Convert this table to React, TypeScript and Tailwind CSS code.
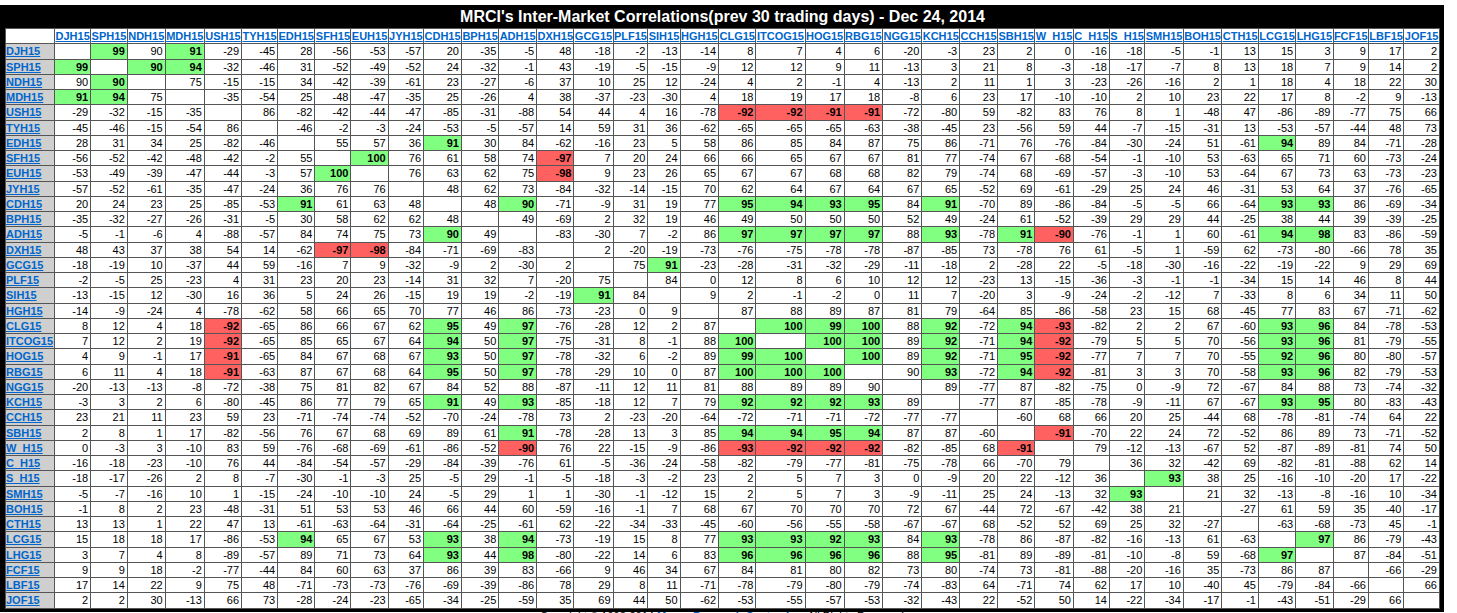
const symbols = [
	"DJH15", "SPH15", "NDH15", "MDH15", "USH15", "TYH15", "EDH15", "SFH15", "EUH15", "JYH15",
	"CDH15", "BPH15", "ADH15", "DXH15", "GCG15", "PLF15", "SIH15", "HGH15", "CLG15", "ITCOG15",
	"HOG15", "RBG15", "NGG15", "KCH15", "CCH15", "SBH15", "W_H15", "C_H15", "S_H15", "SMH15",
	"BOH15", "CTH15", "LCG15", "LHG15", "FCF15", "LBF15", "JOF15",
];

// one row per symbol, same order as the columns; "." = diagonal, g = strong positive, r = strong negative
const rows = [
	". 99g 90 91g -29 -45 28 -56 -53 -57 20 -35 -5 48 -18 -2 -13 -14 8 7 4 6 -20 -3 23 2 0 -16 -18 -5 -1 13 15 3 9 17 2",
	"99g . 90g 94g -32 -46 31 -52 -49 -52 24 -32 -1 43 -19 -5 -15 -9 12 12 9 11 -13 3 21 8 -3 -18 -17 -7 8 13 18 7 9 14 2",
	"90 90g . 75 -15 -15 34 -42 -39 -61 23 -27 -6 37 10 25 12 -24 4 2 -1 4 -13 2 11 1 3 -23 -26 -16 2 1 18 4 18 22 30",
	"91g 94g 75 . -35 -54 25 -48 -47 -35 25 -26 4 38 -37 -23 -30 4 18 19 17 18 -8 6 23 17 -10 -10 2 10 23 22 17 8 -2 9 -13",
	"-29 -32 -15 -35 . 86 -82 -42 -44 -47 -85 -31 -88 54 44 4 16 -78 -92r -92r -91r -91r -72 -80 59 -82 83 76 8 1 -48 47 -86 -89 -77 75 66",
	"-45 -46 -15 -54 86 . -46 -2 -3 -24 -53 -5 -57 14 59 31 36 -62 -65 -65 -65 -63 -38 -45 23 -56 59 44 -7 -15 -31 13 -53 -57 -44 48 73",
	"28 31 34 25 -82 -46 . 55 57 36 91g 30 84 -62 -16 23 5 58 86 85 84 87 75 86 -71 76 -76 -84 -30 -24 51 -61 94g 89 84 -71 -28",
	"-56 -52 -42 -48 -42 -2 55 . 100g 76 61 58 74 -97r 7 20 24 66 66 65 67 67 81 77 -74 67 -68 -54 -1 -10 53 -63 65 71 60 -73 -24",
	"-53 -49 -39 -47 -44 -3 57 100g . 76 63 62 75 -98r 9 23 26 65 67 67 68 68 82 79 -74 68 -69 -57 -3 -10 53 -64 67 73 63 -73 -23",
	"-57 -52 -61 -35 -47 -24 36 76 76 . 48 62 73 -84 -32 -14 -15 70 62 64 67 64 67 65 -52 69 -61 -29 25 24 46 -31 53 64 37 -76 -65",
	"20 24 23 25 -85 -53 91g 61 63 48 . 48 90g -71 -9 31 19 77 95g 94g 93g 95g 84 91g -70 89 -86 -84 -5 -5 66 -64 93g 93g 86 -69 -34",
	"-35 -32 -27 -26 -31 -5 30 58 62 62 48 . 49 -69 2 32 19 46 49 50 50 50 52 49 -24 61 -52 -39 29 29 44 -25 38 44 39 -39 -25",
	"-5 -1 -6 4 -88 -57 84 74 75 73 90g 49 . -83 -30 7 -2 86 97g 97g 97g 97g 88 93g -78 91g -90r -76 -1 1 60 -61 94g 98g 83 -86 -59",
	"48 43 37 38 54 14 -62 -97r -98r -84 -71 -69 -83 . 2 -20 -19 -73 -76 -75 -78 -78 -87 -85 73 -78 76 61 -5 1 -59 62 -73 -80 -66 78 35",
	"-18 -19 10 -37 44 59 -16 7 9 -32 -9 2 -30 2 . 75 91g -23 -28 -31 -32 -29 -11 -18 2 -28 22 -5 -18 -30 -16 -22 -19 -22 9 29 69",
	"-2 -5 25 -23 4 31 23 20 23 -14 31 32 7 -20 75 . 84 0 12 8 6 10 12 12 -23 13 -15 -36 -3 -1 -1 -34 15 14 46 8 44",
	"-13 -15 12 -30 16 36 5 24 26 -15 19 19 -2 -19 91g 84 . 9 2 -1 -2 0 11 7 -20 3 -9 -24 -2 -12 7 -33 8 6 34 11 50",
	"-14 -9 -24 4 -78 -62 58 66 65 70 77 46 86 -73 -23 0 9 . 87 88 89 87 81 79 -64 85 -86 -58 23 15 68 -45 77 83 67 -71 -62",
	"8 12 4 18 -92r -65 86 66 67 62 95g 49 97g -76 -28 12 2 87 . 100g 99g 100g 88 92g -72 94g -93r -82 2 2 67 -60 93g 96g 84 -78 -53",
	"7 12 2 19 -92r -65 85 65 67 64 94g 50 97g -75 -31 8 -1 88 100g . 100g 100g 89 92g -71 94g -92r -79 5 5 70 -56 93g 96g 81 -79 -55",
	"4 9 -1 17 -91r -65 84 67 68 67 93g 50 97g -78 -32 6 -2 89 99g 100g . 100g 89 92g -71 95g -92r -77 7 7 70 -55 92g 96g 80 -80 -57",
	"6 11 4 18 -91r -63 87 67 68 64 95g 50 97g -78 -29 10 0 87 100g 100g 100g . 90 93g -72 94g -92r -81 3 3 70 -58 93g 96g 82 -79 -53",
	"-20 -13 -13 -8 -72 -38 75 81 82 67 84 52 88 -87 -11 12 11 81 88 89 89 90 . 89 -77 87 -82 -75 0 -9 72 -67 84 88 73 -74 -32",
	"-3 3 2 6 -80 -45 86 77 79 65 91g 49 93g -85 -18 12 7 79 92g 92g 92g 93g 89 . -77 87 -85 -78 -9 -11 67 -67 93g 95g 80 -83 -43",
	"23 21 11 23 59 23 -71 -74 -74 -52 -70 -24 -78 73 2 -23 -20 -64 -72 -71 -71 -72 -77 -77 . -60 68 66 20 25 -44 68 -78 -81 -74 64 22",
	"2 8 1 17 -82 -56 76 67 68 69 89 61 91g -78 -28 13 3 85 94g 94g 95g 94g 87 87 -60 . -91r -70 22 24 72 -52 86 89 73 -71 -52",
	"0 -3 3 -10 83 59 -76 -68 -69 -61 -86 -52 -90r 76 22 -15 -9 -86 -93r -92r -92r -92r -82 -85 68 -91r . 79 -12 -13 -67 52 -87 -89 -81 74 50",
	"-16 -18 -23 -10 76 44 -84 -54 -57 -29 -84 -39 -76 61 -5 -36 -24 -58 -82 -79 -77 -81 -75 -78 66 -70 79 . 36 32 -42 69 -82 -81 -88 62 14",
	"-18 -17 -26 2 8 -7 -30 -1 -3 25 -5 29 -1 -5 -18 -3 -2 23 2 5 7 3 0 -9 20 22 -12 36 . 93g 38 25 -16 -10 -20 17 -22",
	"-5 -7 -16 10 1 -15 -24 -10 -10 24 -5 29 1 1 -30 -1 -12 15 2 5 7 3 -9 -11 25 24 -13 32 93g . 21 32 -13 -8 -16 10 -34",
	"-1 8 2 23 -48 -31 51 53 53 46 66 44 60 -59 -16 -1 7 68 67 70 70 70 72 67 -44 72 -67 -42 38 21 . -27 61 59 35 -40 -17",
	"13 13 1 22 47 13 -61 -63 -64 -31 -64 -25 -61 62 -22 -34 -33 -45 -60 -56 -55 -58 -67 -67 68 -52 52 69 25 32 -27 . -63 -68 -73 45 -1",
	"15 18 18 17 -86 -53 94g 65 67 53 93g 38 94g -73 -19 15 8 77 93g 93g 92g 93g 84 93g -78 86 -87 -82 -16 -13 61 -63 . 97g 86 -79 -43",
	"3 7 4 8 -89 -57 89 71 73 64 93g 44 98g -80 -22 14 6 83 96g 96g 96g 96g 88 95g -81 89 -89 -81 -10 -8 59 -68 97g . 87 -84 -51",
	"9 9 18 -2 -77 -44 84 60 63 37 86 39 83 -66 9 46 34 67 84 81 80 82 73 80 -74 73 -81 -88 -20 -16 35 -73 86 87 . -66 -29",
	"17 14 22 9 75 48 -71 -73 -73 -76 -69 -39 -86 78 29 8 11 -71 -78 -79 -80 -79 -74 -83 64 -71 74 62 17 10 -40 45 -79 -84 -66 . 66",
	"2 2 30 -13 66 73 -28 -24 -23 -65 -34 -25 -59 35 69 44 50 -62 -53 -55 -57 -53 -32 -43 22 -52 50 14 -22 -34 -17 -1 -43 -51 -29 66 .",
];

const label = (s: string) => s.replace("_", "\u00a0\u00a0");

function ValueCell({ token }: { token: string }) {
	if (token === ".") return <td className="border border-[#555] bg-white p-0" />;
	const mark = token.slice(-1);
	if (mark === "g") {
		return (
			<td className="border border-[#555] bg-[#80ff80] py-0 pl-0 pr-[2px] text-right font-bold">
				{token.slice(0, -1)}
			</td>
		);
	}
	if (mark === "r") {
		return (
			<td className="border border-[#555] bg-[#ff6060] py-0 pl-0 pr-[2px] text-right font-bold">
				{token.slice(0, -1)}
			</td>
		);
	}
	return <td className="border border-[#555] bg-white py-0 pl-0 pr-[2px] text-right">{token}</td>;
}

export default function App() {
	return (
		<div className="min-h-screen bg-white pt-[5px] font-['Liberation_Sans',Arial,sans-serif] text-black">
			<div className="w-[1444px] bg-black pb-[3px] pl-[5px] pr-[4px]">
				<div className="flex h-[23px] items-center justify-center text-[16px] font-bold text-white">
					MRCI's Inter-Market Correlations(prev 30 trading days) - Dec 24, 2014
				</div>
				<table className="w-full border-collapse text-[11px] leading-[12px]">
					<thead>
						<tr className="h-[15.26px]">
							<th className="border border-[#555] bg-white p-0" />
							{symbols.map((s) => (
								<th
									key={s}
									className="whitespace-nowrap border border-[#555] bg-white p-0 text-center font-bold"
								>
									<span className="text-[#0066cc] underline">{label(s)}</span>
								</th>
							))}
						</tr>
					</thead>
					<tbody>
						{rows.map((row, i) => (
							<tr key={symbols[i]} className="h-[15.26px]">
								<td className="whitespace-nowrap border border-[#555] bg-[#cfcfcf] p-0 text-left font-bold">
									<span className="text-[#0066cc] underline">{label(symbols[i])}</span>
								</td>
								{row.split(" ").map((t, j) => (
									<ValueCell key={symbols[j]} token={t} />
								))}
							</tr>
						))}
					</tbody>
				</table>
			</div>
			<p className="w-[1444px] text-center text-[11px] leading-[8px]">
				Copyright © 1998-2014{" "}
				<span className="font-bold text-[#0066cc]">Moore Research Center, Inc.</span> All Rights
				Reserved
			</p>
		</div>
	);
}
